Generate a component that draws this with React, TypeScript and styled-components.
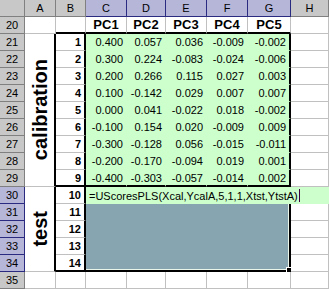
import React from "react";
import styled, { createGlobalStyle } from "styled-components";

const Global = createGlobalStyle`
  html, body { margin: 0; padding: 0; background: #ffffff; }
  body { font-family: "Liberation Sans", Arial, sans-serif; }
`;

const GRID = "1px solid #c0c0c0";
const THICK = "2px solid #000000";
const GREEN = "#ccffcc";
const SELFILL = "#87a4b1";

const Sheet = styled.div`
  display: grid;
  grid-template-columns: 25px 31px 30px 41px 39px 41px 41px 43px 1fr;
  grid-template-rows: repeat(17, 17px);
  width: 329px;
  height: 290px;
  overflow: hidden;
  background: #ffffff;
`;

const Head = styled.div<{ $sel?: boolean }>`
  box-sizing: border-box;
  display: flex;
  align-items: center;
  justify-content: center;
  font-size: 11px;
  color: #000;
  background: ${(p) => (p.$sel ? "#b6b6d9" : "#c8c8c8")};
  border-right: 1px solid ${(p) => (p.$sel ? "#2a2a80" : "#808080")};
  border-bottom: 1px solid ${(p) => (p.$sel ? "#2a2a80" : "#808080")};
`;

const Cell = styled.div<{
  $r?: string;
  $b?: string;
  $bg?: string;
  $align?: string;
  $bold?: boolean;
  $size?: number;
  $cs?: number;
  $rs?: number;
}>`
  box-sizing: border-box;
  position: relative;
  display: flex;
  align-items: center;
  justify-content: ${(p) => p.$align ?? "flex-end"};
  padding: 0 3px;
  font-size: ${(p) => p.$size ?? 11}px;
  font-weight: ${(p) => (p.$bold ? 700 : 400)};
  color: #000;
  white-space: nowrap;
  background: ${(p) => p.$bg ?? "#ffffff"};
  border-right: ${(p) => p.$r ?? GRID};
  border-bottom: ${(p) => p.$b ?? GRID};
  grid-column: span ${(p) => p.$cs ?? 1};
  grid-row: span ${(p) => p.$rs ?? 1};
`;

const SideText = styled.span`
  writing-mode: vertical-rl;
  transform: rotate(180deg);
  font-size: 20px;
  font-weight: 700;
  line-height: 1;
`;

const Formula = styled.span`
  font-size: 11px;
  display: flex;
  align-items: center;
`;

const Caret = styled.span`
  display: inline-block;
  width: 1px;
  height: 13px;
  margin-left: 1px;
  background: #400040;
`;

const Selection = styled.div`
  box-sizing: border-box;
  position: relative;
  grid-column: span 5;
  grid-row: span 4;
  background: ${SELFILL};
  border-right: ${THICK};
  border-bottom: ${THICK};
  box-shadow: inset -1px -1px 0 #eaf6ea;
`;

const FillHandle = styled.div`
  position: absolute;
  right: -4px;
  bottom: -4px;
  width: 5px;
  height: 5px;
  background: #000;
  border: 1px solid #fff;
`;

const calib: string[][] = [
  ["0.400", "0.057", "0.036", "-0.009", "-0.002"],
  ["0.300", "0.224", "-0.083", "-0.024", "-0.006"],
  ["0.200", "0.266", "0.115", "0.027", "0.003"],
  ["0.100", "-0.142", "0.029", "0.007", "0.007"],
  ["0.000", "0.041", "-0.022", "0.018", "-0.002"],
  ["-0.100", "0.154", "0.020", "-0.009", "0.009"],
  ["-0.300", "-0.128", "0.056", "-0.015", "-0.011"],
  ["-0.200", "-0.170", "-0.094", "0.019", "0.001"],
  ["-0.400", "-0.303", "-0.057", "-0.014", "0.002"],
];

const letters = ["A", "B", "C", "D", "E", "F", "G", "H"];

export default function App() {
  const cells: React.ReactNode[] = [];

  // column header row
  cells.push(<Head key="corner" />);
  letters.forEach((l, i) =>
    cells.push(
      <Head key={"h" + l} $sel={i >= 2 && i <= 6}>
        {l}
      </Head>
    )
  );

  // row 20
  cells.push(<Head key="r20">20</Head>);
  cells.push(<Cell key="a20" />);
  cells.push(<Cell key="b20" $b={THICK} />);
  ["PC1", "PC2", "PC3", "PC4", "PC5"].forEach((t) =>
    cells.push(
      <Cell key={"h" + t} $b={THICK} $align="center" $bold $size={13}>
        {t}
      </Cell>
    )
  );
  cells.push(<Cell key="h20" />);

  // rows 21-29
  calib.forEach((vals, i) => {
    const r = 21 + i;
    const last = i === calib.length - 1;
    cells.push(<Head key={"r" + r}>{r}</Head>);
    if (i === 0) {
      cells.push(
        <Cell key="acal" $rs={9} $r={THICK} $align="center">
          <SideText>calibration</SideText>
        </Cell>
      );
    }
    cells.push(
      <Cell key={"b" + r} $r={THICK} $b={last ? THICK : GRID} $bold>
        {i + 1}
      </Cell>
    );
    vals.forEach((v, j) =>
      cells.push(
        <Cell
          key={"c" + r + j}
          $bg={GREEN}
          $r={j === 4 ? THICK : "1px solid " + GREEN}
          $b={last ? THICK : "1px solid " + GREEN}
        >
          {v}
        </Cell>
      )
    );
    cells.push(<Cell key={"h" + r} />);
  });

  // rows 30-34
  for (let i = 0; i < 5; i++) {
    const r = 30 + i;
    const last = i === 4;
    cells.push(
      <Head key={"r" + r} $sel>
        {r}
      </Head>
    );
    if (i === 0) {
      cells.push(
        <Cell key="atest" $rs={5} $r={THICK} $align="center">
          <SideText>test</SideText>
        </Cell>
      );
    }
    cells.push(
      <Cell key={"b" + r} $r={THICK} $b={last ? THICK : GRID} $bold>
        {10 + i}
      </Cell>
    );
    if (i === 0) {
      cells.push(
        <Cell key="edit" $cs={6} $bg={GREEN} $align="flex-start" $r="none" $b="none">
          <Formula>
            =UScoresPLS(Xcal,YcalA,5,1,1,Xtst,YtstA)
            <Caret />
          </Formula>
        </Cell>
      );
    } else {
      if (i === 1) {
        cells.push(
          <Selection key="sel">
            <FillHandle />
          </Selection>
        );
      }
      cells.push(<Cell key={"h" + r} />);
    }
  }

  // row 35
  cells.push(<Head key="r35">35</Head>);
  for (let j = 0; j < 8; j++) cells.push(<Cell key={"r35" + j} />);

  return (
    <>
      <Global />
      <Sheet>{cells}</Sheet>
    </>
  );
}
